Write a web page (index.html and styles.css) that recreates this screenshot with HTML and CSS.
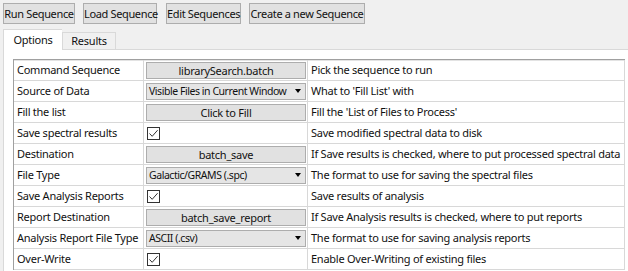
FILE: index.html
```html
<!DOCTYPE html>
<html>
<head>
<meta charset="utf-8">
<link rel="stylesheet" href="styles.css">
</head>
<body>
<div class="toolbar">
  <button class="tbtn b1">Run Sequence</button>
  <button class="tbtn b2">Load Sequence</button>
  <button class="tbtn b3">Edit Sequences</button>
  <button class="tbtn b4">Create a new Sequence</button>
</div>
<div class="tabs">
  <div class="tab active">Options</div>
  <div class="tab">Results</div>
</div>
<div class="panel">
  <div class="grid">
    <div class="c1">Command Sequence</div>
    <div class="c2"><div class="cbtn">librarySearch.batch</div></div>
    <div class="c3">Pick the sequence to run</div>

    <div class="c1">Source of Data</div>
    <div class="c2"><div class="combo"><span>Visible Files in Current Window</span><i class="arrow"></i></div></div>
    <div class="c3">What to 'Fill List' with</div>

    <div class="c1">Fill the list</div>
    <div class="c2"><div class="cbtn">Click to Fill</div></div>
    <div class="c3">Fill the 'List of Files to Process'</div>

    <div class="c1">Save spectral results</div>
    <div class="c2"><span class="check"><svg width="11" height="11" viewBox="0 0 11 11"><path d="M1.5 5.5 L4.2 8.3 L9.6 2.2" fill="none" stroke="#333" stroke-width="1"/></svg></span></div>
    <div class="c3">Save modified spectral data to disk</div>

    <div class="c1">Destination</div>
    <div class="c2"><div class="cbtn">batch_save</div></div>
    <div class="c3">If Save results is checked, where to put processed spectral data</div>

    <div class="c1">File Type</div>
    <div class="c2"><div class="combo"><span>Galactic/GRAMS (.spc)</span><i class="arrow"></i></div></div>
    <div class="c3">The format to use for saving the spectral files</div>

    <div class="c1">Save Analysis Reports</div>
    <div class="c2"><span class="check"><svg width="11" height="11" viewBox="0 0 11 11"><path d="M1.5 5.5 L4.2 8.3 L9.6 2.2" fill="none" stroke="#333" stroke-width="1"/></svg></span></div>
    <div class="c3">Save results of analysis</div>

    <div class="c1">Report Destination</div>
    <div class="c2"><div class="cbtn">batch_save_report</div></div>
    <div class="c3">If Save Analysis results is checked, where to put reports</div>

    <div class="c1">Analysis Report File Type</div>
    <div class="c2"><div class="combo"><span>ASCII (.csv)</span><i class="arrow"></i></div></div>
    <div class="c3">The format to use for saving analysis reports</div>

    <div class="c1">Over-Write</div>
    <div class="c2"><span class="check"><svg width="11" height="11" viewBox="0 0 11 11"><path d="M1.5 5.5 L4.2 8.3 L9.6 2.2" fill="none" stroke="#333" stroke-width="1"/></svg></span></div>
    <div class="c3">Enable Over-Writing of existing files</div>
  </div>
</div>
</body>
</html>
```
FILE: styles.css
```css
html, body {
  margin: 0;
  padding: 0;
  height: 100%;
  background: #f0f0f0;
  font-family: "Noto Sans", "Open Sans", sans-serif;
  font-size: 11px;
  letter-spacing: -0.25px;
  color: #111;
  overflow: hidden;
}

.toolbar {
  display: flex;
  padding: 3px 0 0 3px;
  height: 20px;
}

.tbtn {
  font: inherit;
  letter-spacing: -0.35px;
  white-space: nowrap;
  box-sizing: border-box;
  height: 21px;
  padding: 0;
  margin: 0 8px 0 0;
  background: #e1e1e1;
  border: 1px solid #adadad;
  color: #111;
  text-align: center;
  line-height: 18px;
}
.b1 { width: 72px; }
.b2 { width: 74px; margin-right: 9px; }
.b3 { width: 75px; }
.b4 { width: 116px; }

.tabs {
  display: flex;
  align-items: flex-end;
  padding: 5px 0 0 3px;
  height: 21px;
}

.tab {
  box-sizing: border-box;
  white-space: nowrap;
  height: 17px;
  border: 1px solid #d9d9d9;
  border-bottom: none;
  background: #f0f0f0;
  line-height: 16px;
  width: 54px;
  text-align: center;
}
.tab.active {
  height: 21px;
  width: 59px;
  background: #fff;
  line-height: 20px;
  margin-bottom: -1px;
  position: relative;
  z-index: 1;
  border-right: none;
}

.panel {
  background: #fff;
  border-top: 1px solid #d9d9d9;
  border-left: 1px solid #d9d9d9;
  margin-left: 3px;
  height: 222px;
  padding: 9px 0 0 9px;
  box-sizing: border-box;
  overflow: hidden;
}

.grid {
  display: grid;
  grid-template-columns: 130px 164px 317px;
  grid-auto-rows: 21px;
  border-top: 1px solid #a0a0a0;
  border-left: 1px solid #a0a0a0;
  width: 611px;
  box-shadow: inset 0 1px 0 #e3e3e3;
}

.grid > div {
  box-sizing: border-box;
  border-right: 1px solid #d8d8d8;
  border-bottom: 1px solid #d8d8d8;
  line-height: 20px;
  white-space: nowrap;
  overflow: hidden;
}

.c1 { padding-left: 3px; }
.c3 { padding-left: 3px; }
.c2 { padding: 0 1px 0 2px; display: flex; align-items: center; }

.cbtn {
  box-sizing: border-box;
  width: 100%;
  height: 17px;
  background: #e1e1e1;
  border: 1px solid #adadad;
  text-align: center;
  line-height: 15px;
}

.combo {
  box-sizing: border-box;
  width: 100%;
  height: 17px;
  background: #e5e5e5;
  border: 1px solid #adadad;
  line-height: 15px;
  padding-left: 2px;
  display: flex;
  justify-content: space-between;
  align-items: center;
  font-size: 10.5px;
  letter-spacing: -0.45px;
}

.arrow {
  flex: none;
  width: 0;
  height: 0;
  border-left: 3.5px solid transparent;
  border-right: 3.5px solid transparent;
  border-top: 4px solid #000;
  margin-right: 4px;
}

.check {
  box-sizing: border-box;
  width: 13px;
  height: 13px;
  border: 1px solid #333;
  background: #fff;
  display: block;
  margin-left: 1px;
}
.check svg { display: block; }
```
